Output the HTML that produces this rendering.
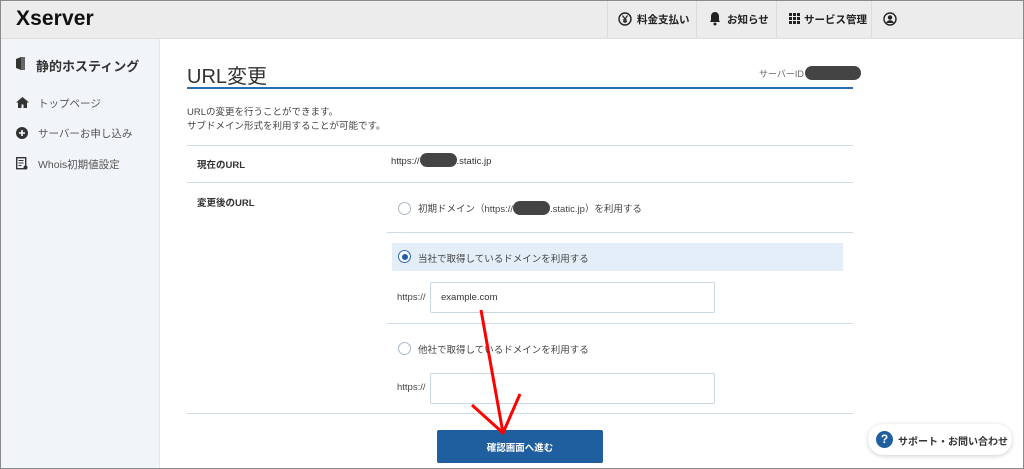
<!DOCTYPE html>
<html><head><meta charset="utf-8"><style>
*{margin:0;padding:0;box-sizing:border-box}
body{width:1024px;height:469px;overflow:hidden;background:#fff;font-family:"Liberation Sans","Noto Sans CJK JP",sans-serif;color:#333;position:relative}
.a{position:absolute;white-space:nowrap}
.frame{position:absolute;left:0;top:0;width:1024px;height:469px;border:1px solid #8a8a8a;pointer-events:none;z-index:10}
.hdr{position:absolute;left:0;top:0;width:1024px;height:39px;background:#ececec;border-bottom:1px solid #ddd}
.sb{position:absolute;left:0;top:39px;width:160px;height:430px;background:#f1f4f8;border-right:1px solid #e2e6ea}
.hl{position:absolute;height:1px;background:#cfdbe8}
.blob{display:inline-block;background:#444;border-radius:8px;vertical-align:middle}
.radio{position:absolute;width:13px;height:13px;border:1px solid #aab8c6;border-radius:50%;background:#fff}
.inp{position:absolute;height:31px;border:1px solid #c9d6e3;border-radius:2px;background:#fff}
.nav{font-size:10.5px;font-weight:bold;color:#222}
.sep{position:absolute;top:0;width:1px;height:39px;background:#dcdcdc}
</style></head><body>
<div class="hdr"></div>
<div class="a" style="left:16px;top:7px;font-size:21px;font-weight:bold;color:#111;letter-spacing:0.1px">Xserver</div>
<div class="sep" style="left:607px"></div><div class="sep" style="left:696px"></div><div class="sep" style="left:776px"></div><div class="sep" style="left:871px"></div>
<svg class="a" style="left:618px;top:12px" width="14" height="14" viewBox="0 0 14 14"><circle cx="7" cy="7" r="6" fill="none" stroke="#222" stroke-width="1.4"/><path d="M4.5 3.5L7 7l2.5-3.5M7 7v4M5 8h4M5 9.7h4" stroke="#222" stroke-width="1.2" fill="none"/></svg>
<div class="a nav" style="left:637px;top:12px">料金支払い</div>
<svg class="a" style="left:709px;top:11px" width="12" height="15" viewBox="0 0 12 15"><path d="M6 1c-2.5 0-4 2-4 4.5V9L1 11h10L10 9V5.5C10 3 8.5 1 6 1z" fill="#222"/><circle cx="6" cy="13" r="1.5" fill="#222"/></svg>
<div class="a nav" style="left:727px;top:12px">お知らせ</div>
<svg class="a" style="left:789px;top:13px" width="11" height="11" viewBox="0 0 11 11" fill="#222"><rect x="0" y="0" width="3" height="3"/><rect x="4" y="0" width="3" height="3"/><rect x="8" y="0" width="3" height="3"/><rect x="0" y="4" width="3" height="3"/><rect x="4" y="4" width="3" height="3"/><rect x="8" y="4" width="3" height="3"/><rect x="0" y="8" width="3" height="3"/><rect x="4" y="8" width="3" height="3"/><rect x="8" y="8" width="3" height="3"/></svg>
<div class="a nav" style="left:804px;top:12px">サービス管理</div>
<svg class="a" style="left:883px;top:12px" width="14" height="14" viewBox="0 0 14 14"><circle cx="7" cy="7" r="6" fill="none" stroke="#222" stroke-width="1.4"/><circle cx="7" cy="5.5" r="2.2" fill="#222"/><path d="M3 11c1-2 2.5-2.7 4-2.7s3 .7 4 2.7" fill="#222"/></svg>

<div class="sb"></div>
<svg class="a" style="left:16px;top:57px" width="9" height="13" viewBox="0 0 9 13"><path d="M0 2L5 0v13L0 11z" fill="#333"/><path d="M5 0h4v13H5" fill="#666"/></svg>
<div class="a" style="left:36px;top:56px;font-size:13px;font-weight:bold;color:#333">静的ホスティング</div>
<svg class="a" style="left:16px;top:97px" width="13" height="11" viewBox="0 0 13 11"><path d="M6.5 0L0 5.5h2V11h3.5V7.5h2V11H11V5.5h2z" fill="#333"/></svg>
<div class="a" style="left:38px;top:96px;font-size:10.5px;color:#555">トップページ</div>
<svg class="a" style="left:16px;top:127px" width="12" height="12" viewBox="0 0 12 12"><circle cx="6" cy="6" r="6" fill="#333"/><path d="M6 3v6M3 6h6" stroke="#fff" stroke-width="1.6"/></svg>
<div class="a" style="left:38px;top:126px;font-size:10.5px;color:#555">サーバーお申し込み</div>
<svg class="a" style="left:16px;top:157px" width="12" height="13" viewBox="0 0 12 13"><rect x="0.7" y="0.7" width="9" height="11" fill="none" stroke="#333" stroke-width="1.4"/><path d="M2.5 3.5h5M2.5 6h5M2.5 8.5h3" stroke="#333" stroke-width="1.1"/><circle cx="9.5" cy="10.5" r="2" fill="#333"/></svg>
<div class="a" style="left:38px;top:157px;font-size:10.5px;color:#555">Whois初期値設定</div>

<div class="a" style="left:187px;top:60px;font-size:20px;color:#333">URL変更</div>
<div class="a" style="left:759px;top:67px;font-size:9px;color:#666">サーバーID<span class="blob" style="width:56px;height:14px;margin-left:1px;margin-top:-3px"></span></div>
<div class="hl" style="left:187px;top:87px;width:666px;height:2px;background:#2a6db5"></div>
<div class="a" style="left:187px;top:106px;font-size:9.5px;color:#444;line-height:14px">URLの変更を行うことができます。<br>サブドメイン形式を利用することが可能です。</div>
<div class="hl" style="left:187px;top:145px;width:666px"></div>
<div class="a" style="left:197px;top:157px;font-size:9.5px;font-weight:bold;color:#333">現在のURL</div>
<div class="a" style="left:391px;top:156px;font-size:9.5px;color:#333">https://<span class="blob" style="width:37px;height:14px;margin-top:-3px"></span>.static.jp</div>
<div class="hl" style="left:187px;top:182px;width:666px"></div>
<div class="a" style="left:197px;top:195px;font-size:9.5px;font-weight:bold;color:#333">変更後のURL</div>
<div class="radio" style="left:398px;top:202px"></div>
<div class="a" style="left:418px;top:201px;font-size:9.5px;color:#444">初期ドメイン（https://<span class="blob" style="width:37px;height:14px;margin-top:-3px"></span>.static.jp）を利用する</div>
<div class="hl" style="left:387px;top:232px;width:466px"></div>
<div style="position:absolute;left:392px;top:243px;width:451px;height:28px;background:#e3eef9"></div>
<div class="radio" style="left:398px;top:250px;border:1px solid #2a6db5"><div style="position:absolute;left:2.5px;top:2.5px;width:6px;height:6px;border-radius:50%;background:#1f5fa8"></div></div>
<div class="a" style="left:418px;top:251px;font-size:9.5px;color:#444">当社で取得しているドメインを利用する</div>
<div class="a" style="left:397px;top:292px;font-size:9.5px;color:#444">https://</div>
<div class="inp" style="left:430px;top:282px;width:285px"></div>
<div class="a" style="left:441px;top:292px;font-size:9.5px;color:#333">example.com</div>
<div class="hl" style="left:387px;top:323px;width:466px"></div>
<div class="radio" style="left:398px;top:342px"></div>
<div class="a" style="left:418px;top:342px;font-size:9.5px;color:#444">他社で取得しているドメインを利用する</div>
<div class="a" style="left:397px;top:382px;font-size:9.5px;color:#444">https://</div>
<div class="inp" style="left:430px;top:373px;width:285px"></div>
<div class="hl" style="left:187px;top:413px;width:666px"></div>
<div style="position:absolute;left:437px;top:430px;width:166px;height:33px;background:#1f5fa0;border-radius:2px"></div>
<div class="a" style="left:437px;top:440px;width:166px;text-align:center;font-size:9.5px;font-weight:bold;color:#fff">確認画面へ進む</div>
<div style="position:absolute;left:868px;top:424px;width:144px;height:31px;background:#fff;border-radius:16px;box-shadow:0 1px 5px rgba(0,0,0,.2)"></div>
<div class="a" style="left:876px;top:431px;width:17px;height:17px;border-radius:50%;background:#1f5fa0;color:#fff;font-size:12px;font-weight:bold;text-align:center;line-height:17px">?</div>
<div class="a" style="left:898px;top:433px;font-size:10px;font-weight:bold;color:#333">サポート・お問い合わせ</div>
<svg class="a" style="left:0;top:0" width="1024" height="469"><path d="M481 310L503 433" stroke="#f00" stroke-width="3" fill="none"/><path d="M472 405L503 433L520 394" stroke="#f00" stroke-width="3" fill="none"/></svg>
<div class="frame"></div>
</body></html>
